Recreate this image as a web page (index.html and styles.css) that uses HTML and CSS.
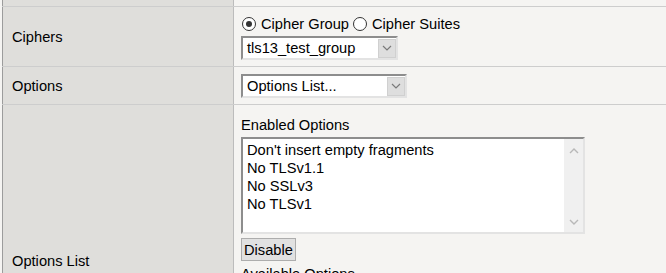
FILE: index.html
```html
<!DOCTYPE html>
<html lang="en">
<head>
  <meta charset="UTF-8">
  <title>SSL Profile - Ciphers</title>
  <link rel="stylesheet" href="styles.css">
</head>
<body>
  <table class="settings">
    <tr class="cut">
      <td class="label"></td>
      <td class="value"></td>
    </tr>
    <tr>
      <td class="label">Ciphers</td>
      <td class="value">
        <div class="radios">
          <label class="choice"><span class="radio checked"></span>Cipher Group</label>
          <label class="choice"><span class="radio"></span>Cipher Suites</label>
        </div>
        <div class="dropdown group-select">
          <span class="current">tls13_test_group</span>
          <span class="arrow"><svg width="10" height="6" viewBox="0 0 10 6"><polyline points="1,1 5,5 9,1" fill="none" stroke="#7a7a7a" stroke-width="1.2"/></svg></span>
        </div>
      </td>
    </tr>
    <tr>
      <td class="label">Options</td>
      <td class="value">
        <div class="dropdown options-select">
          <span class="current">Options List...</span>
          <span class="arrow"><svg width="10" height="6" viewBox="0 0 10 6"><polyline points="1,1 5,5 9,1" fill="none" stroke="#7a7a7a" stroke-width="1.2"/></svg></span>
        </div>
      </td>
    </tr>
    <tr>
      <td class="label">Options List</td>
      <td class="value">
        <!-- Enabled options -->
        <div class="list-section">
          <div class="list-title">Enabled Options</div>
          <div class="listbox">
            <ul class="items">
              <li>Don't insert empty fragments</li>
              <li>No TLSv1.1</li>
              <li>No SSLv3</li>
              <li>No TLSv1</li>
            </ul>
            <div class="scrollbar">
              <svg width="10" height="6" viewBox="0 0 10 6"><polyline points="1,5 5,1 9,5" fill="none" stroke="#b8b8b8" stroke-width="1.4"/></svg>
              <svg width="10" height="6" viewBox="0 0 10 6"><polyline points="1,1 5,5 9,1" fill="none" stroke="#b8b8b8" stroke-width="1.4"/></svg>
            </div>
          </div>
          <button type="button" class="btn">Disable</button>
        </div>
        <!-- Available options -->
        <div class="list-section">
          <div class="list-title">Available Options</div>
          <div class="listbox">
            <ul class="items">
              <li>Cipher server preference</li>
              <li>No DTLSv1.2</li>
              <li>No TLSv1.3</li>
            </ul>
            <div class="scrollbar">
              <svg width="10" height="6" viewBox="0 0 10 6"><polyline points="1,5 5,1 9,5" fill="none" stroke="#b8b8b8" stroke-width="1.4"/></svg>
              <svg width="10" height="6" viewBox="0 0 10 6"><polyline points="1,1 5,5 9,1" fill="none" stroke="#b8b8b8" stroke-width="1.4"/></svg>
            </div>
          </div>
          <button type="button" class="btn">Enable</button>
        </div>
      </td>
    </tr>
  </table>
</body>
</html>
```

FILE: styles.css
```css
body {
  margin: 0;
  background: #f5f4f2;
  font-family: "Liberation Sans", Arial, sans-serif;
  font-size: 14.67px;
  color: #000;
  overflow: hidden;
}
.settings {
  margin-left: 2px;
  width: calc(100% - 2px);
  border-collapse: collapse;
  border-left: 1px solid #9c9c9c;
}
.settings td {
  border-bottom: 1px solid #cdcdcd;
  padding: 0;
}
.settings .label {
  width: 221px;
  padding-left: 9px;
  background: #dfdedb;
  border-right: 1px solid #bcbcbc;
  vertical-align: middle;
}
.settings .value {
  padding: 7px 7px 6px;
  vertical-align: top;
}
.settings .cut td {
  height: 6px;
  padding: 0;
}
.radios {
  display: flex;
  height: 17px;
  margin: 1px 0 4px;
  align-items: center;
}
.choice {
  display: flex;
  align-items: center;
}
.radio {
  position: relative;
  width: 12px;
  height: 12px;
  margin: 0 5px 0 1px;
  border: 1px solid #333;
  border-radius: 50%;
  background: #fff;
}
.choice + .choice .radio {
  margin-left: 4px;
}
.radio.checked::after {
  content: "";
  position: absolute;
  left: 3px;
  top: 3px;
  width: 6px;
  height: 6px;
  border-radius: 50%;
  background: #333;
}
.dropdown {
  display: flex;
  align-items: center;
  box-sizing: border-box;
  height: 24px;
  background: #fff;
  border-top: 2px solid #8d8d8d;
  border-left: 2px solid #8d8d8d;
  border-right: 2px solid #e3e3e3;
  border-bottom: 2px solid #e3e3e3;
}
.group-select {
  width: 157px;
}
.options-select {
  width: 166px;
}
.dropdown .current {
  flex: 1;
  padding-left: 4px;
  white-space: nowrap;
}
.dropdown .arrow {
  display: flex;
  align-items: center;
  justify-content: center;
  width: 18px;
  height: 19px;
  background: #dedede;
  border: 1px solid #d0d0d0;
  box-sizing: border-box;
}
.list-section {
  margin-top: 5px;
}
.list-title {
  height: 17px;
  line-height: 17px;
}
.listbox {
  display: flex;
  box-sizing: border-box;
  width: 344px;
  height: 97px;
  margin-top: 3px;
  background: #fff;
  border-top: 2px solid #8d8d8d;
  border-left: 2px solid #8d8d8d;
  border-right: 2px solid #e3e3e3;
  border-bottom: 2px solid #e3e3e3;
}
.items {
  flex: 1;
  margin: 0;
  padding: 2px 0 0 4px;
  list-style: none;
}
.items li {
  height: 18px;
  line-height: 18px;
}
.scrollbar {
  display: flex;
  flex-direction: column;
  justify-content: space-between;
  align-items: center;
  width: 19px;
  padding: 9px 0 7px;
  background: #f0f0f0;
}
.btn {
  display: block;
  height: 23px;
  margin-top: 4px;
  padding: 0 2px;
  font: inherit;
  color: #000;
  background: #e1e1e1;
  border: 1px solid #adadad;
}
```
